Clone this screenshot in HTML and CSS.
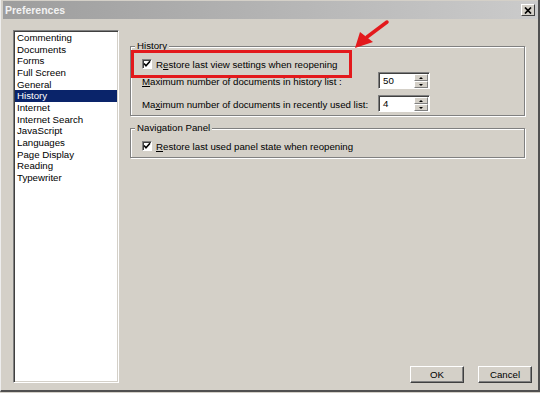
FILE: index.html
```html
<!DOCTYPE html>
<html lang="en">
<head>
    <meta charset="UTF-8">
    <title>Preferences</title>
    <link rel="stylesheet" href="styles.css">
</head>
<body>

    <div class="window">
        <div class="titlebar">
            <span class="title">Preferences</span>
            <span class="close">
                <svg width="8" height="7" viewBox="0 0 8 7"><path d="M1 0.5 L7 6.5 M7 0.5 L1 6.5" stroke="#000" stroke-width="1.7"/></svg>
            </span>
        </div>

        <div class="content">
            <ul class="list">
                <li>Commenting</li>
                <li>Documents</li>
                <li>Forms</li>
                <li>Full Screen</li>
                <li>General</li>
                <li class="selected">History</li>
                <li>Internet</li>
                <li>Internet Search</li>
                <li>JavaScript</li>
                <li>Languages</li>
                <li>Page Display</li>
                <li>Reading</li>
                <li>Typewriter</li>
            </ul>

            <div class="panel">
                <fieldset class="group history">
                    <legend>History</legend>
                    <div class="row check-row first">
                        <span class="checkbox"><svg width="8" height="8" viewBox="0 0 8 8"><path d="M1 3.5 L3 5.8 L7 1.2" fill="none" stroke="#000" stroke-width="1.6"/></svg></span>
                        <span>R<u>e</u>store last view settings when reopening</span>
                    </div>
                    <div class="row spin-row">
                        <span class="label"><u>M</u>aximum number of documents in history list :</span>
                        <span class="spin">
                            <span class="spin-value">50</span>
                            <span class="spin-buttons">
                                <span class="spin-btn"><span class="tri up"></span></span>
                                <span class="spin-btn"><span class="tri down"></span></span>
                            </span>
                        </span>
                    </div>
                    <div class="row spin-row second">
                        <span class="label">Ma<u>x</u>imum number of documents in recently used list:</span>
                        <span class="spin">
                            <span class="spin-value">4</span>
                            <span class="spin-buttons">
                                <span class="spin-btn"><span class="tri up"></span></span>
                                <span class="spin-btn"><span class="tri down"></span></span>
                            </span>
                        </span>
                    </div>
                </fieldset>

                <fieldset class="group nav">
                    <legend>Navigation Panel</legend>
                    <div class="row check-row first">
                        <span class="checkbox"><svg width="8" height="8" viewBox="0 0 8 8"><path d="M1 3.5 L3 5.8 L7 1.2" fill="none" stroke="#000" stroke-width="1.6"/></svg></span>
                        <span><u>R</u>estore last used panel state when reopening</span>
                    </div>
                </fieldset>

                <div class="buttons">
                    <button class="button">OK</button>
                    <button class="button">Cancel</button>
                </div>
            </div>
        </div>

        <!-- annotation drawn over the dialog -->
        <div class="callout"></div>
        <svg class="arrow" width="50" height="40" viewBox="0 0 50 40">
            <path d="M41 7 L21 22" stroke="#e3191c" stroke-width="3.5" stroke-linecap="round"/>
            <path d="M9 33 L14 17 L27 27 Z" fill="#e3191c"/>
        </svg>
    </div>

</body>
</html>
```

FILE: styles.css
```css
body {
    margin: 0;
    background: #d4d0c8;
    font-family: "Liberation Sans", Arial, sans-serif;
    font-size: 9.7px;
    color: #000;
}

.window {
    position: relative;
    width: 540px;
    height: 392px;
    box-sizing: border-box;
    padding: 1px 0 0 2px;
    border-left: 1px solid #eeeeee;
    border-right: 2px solid #505050;
    border-bottom: 2px solid #505050;
    background: #d4d0c8;
    display: flex;
    flex-direction: column;
}

.titlebar {
    height: 18px;
    display: flex;
    align-items: center;
    justify-content: space-between;
    padding: 0 3px 0 2px;
    background: linear-gradient(90deg, #9d9d9d, #cbcbcb);
}

.title {
    font-weight: bold;
    font-size: 10.5px;
    color: #f2f2f2;
}

.close {
    width: 12px;
    height: 10px;
    display: flex;
    align-items: center;
    justify-content: center;
    background: #d4d0c8;
    border: 1px solid;
    border-color: #fff #404040 #404040 #fff;
}

.content {
    flex: 1;
    display: flex;
    gap: 11px;
    padding: 11px 6px 7px 10px;
}

/* left category list */

.list {
    width: 106px;
    margin: 0;
    padding: 0;
    list-style: none;
    box-sizing: border-box;
    background: #fff;
    border: 1px solid;
    border-color: #808080 #fff #fff #808080;
    box-shadow: inset 1px 1px 0 #404040, inset -1px -1px 0 #d4d0c8;
    padding: 1px 1px 0 1px;
}

.list li {
    line-height: 11.67px;
    padding-left: 2px;
    white-space: nowrap;
}

.list .selected {
    background: #0a246a;
    color: #fff;
}

/* right settings panel */

.panel {
    flex: 1;
    display: flex;
    flex-direction: column;
}

.group {
    margin: 10px 7px 0 0;
    padding: 0 0 3px 0;
    border: 1px solid #808080;
    box-shadow: inset 1px 1px 0 #fff, 1px 1px 0 #fff;
    min-width: 0;
}

.group legend {
    margin-left: 4px;
    padding: 0 2px;
    line-height: 12px;
    background: #d4d0c8;
}

.nav {
    margin-top: 6px;
    padding-bottom: 4px;
}

.row {
    display: flex;
    align-items: center;
    padding-left: 11px;
}

.check-row {
    height: 14px;
    gap: 4px;
}

.check-row.first { margin-top: 5px; }

.checkbox {
    width: 8px;
    height: 8px;
    display: flex;
    align-items: center;
    justify-content: center;
    background: #fff;
    border: 1px solid;
    border-color: #808080 #fff #fff #808080;
    box-shadow: inset 1px 1px 0 #404040;
}

.spin-row { margin-top: 1px; }
.spin-row.second { margin-top: 6px; }

.label {
    width: 236px;
    padding-top: 2px;
    white-space: nowrap;
}

.spin {
    width: 52px;
    height: 17px;
    box-sizing: border-box;
    display: flex;
    background: #fff;
    border: 1px solid;
    border-color: #808080 #fff #fff #808080;
    box-shadow: inset 1px 1px 0 #404040;
}

.spin-value {
    flex: 1;
    padding: 2px 0 0 4px;
}

.spin-buttons {
    width: 14px;
    display: flex;
    flex-direction: column;
    padding: 1px 1px 0 0;
}

.spin-btn {
    flex: 1;
    display: flex;
    align-items: center;
    justify-content: center;
    background: #d4d0c8;
    border: 1px solid;
    border-color: #fff #808080 #808080 #fff;
}

.tri {
    width: 0;
    height: 0;
    border-left: 2px solid transparent;
    border-right: 2px solid transparent;
}

.tri.up { border-bottom: 2px solid #000; }
.tri.down { border-top: 2px solid #000; }

.buttons {
    margin-top: auto;
    display: flex;
    justify-content: flex-end;
    gap: 14px;
}

.button {
    width: 54px;
    height: 17px;
    padding: 0;
    font-family: inherit;
    font-size: 9.7px;
    color: #000;
    background: #d4d0c8;
    border: 1px solid;
    border-color: #fff #404040 #404040 #fff;
    box-shadow: inset -1px -1px 0 #808080;
    border-radius: 0;
}

/* red annotation */

.callout {
    position: absolute;
    left: 130px;
    top: 50px;
    width: 221px;
    height: 28px;
    box-sizing: border-box;
    border: 3px solid #e3191c;
}

.arrow {
    position: absolute;
    left: 345px;
    top: 15px;
}
```
